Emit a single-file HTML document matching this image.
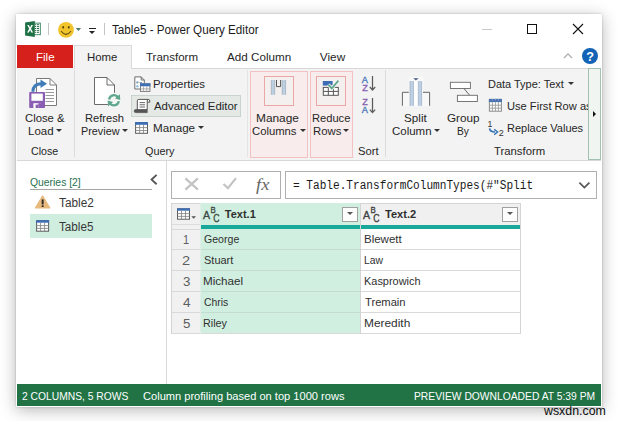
<!DOCTYPE html>
<html>
<head>
<meta charset="utf-8">
<style>
html,body{margin:0;padding:0;}
body{width:617px;height:421px;overflow:hidden;background:#fff;font-family:"Liberation Sans",sans-serif;position:relative;color:#262626;}
.abs{position:absolute;}
svg{position:absolute;overflow:visible;}
.t{position:absolute;white-space:pre;line-height:16px;font-size:11.5px;color:#262626;transform-origin:0 0;}
#win{position:absolute;left:16px;top:14px;width:586px;height:392.7px;background:#fff;box-shadow:0 3px 15px rgba(0,0,0,0.29),0 0 2px rgba(0,0,0,0.22);}
#ribbon{position:absolute;left:17px;top:68px;width:584px;height:93px;background:#f3f3f3;border-bottom:1px solid #d8d8d8;box-sizing:border-box;}
.sep{position:absolute;width:1px;background:#dcdcdc;top:70px;height:87px;}
.pink{position:absolute;background:#f9ecec;border:1px solid #f2c2c2;box-sizing:border-box;}
.pinkin{position:absolute;background:#f5f0f0;border:1px solid #eba6a6;box-sizing:border-box;}
.arr{position:absolute;width:0;height:0;border-left:3px solid transparent;border-right:3px solid transparent;border-top:3px solid #333;}
.row{position:absolute;left:171px;width:350px;height:1px;background:#d9d9d9;}
.vl{position:absolute;width:1px;background:#d4d4d4;top:203px;height:131px;}
</style>
</head>
<body>
<div id="win"></div>

<!-- title bar icons -->
<svg style="left:24px;top:20px" width="18" height="18" viewBox="24 20 18 18">
  <rect x="33.5" y="23.1" width="6.8" height="11.6" fill="#fff" stroke="#2f7f57" stroke-width="0.9"/>
  <g stroke="#256f49" stroke-width="1"><line x1="36.8" y1="24.7" x2="39" y2="24.7"/><line x1="36.8" y1="26.6" x2="39" y2="26.6"/><line x1="36.8" y1="28.5" x2="39" y2="28.5"/><line x1="36.8" y1="30.4" x2="39" y2="30.4"/><line x1="36.8" y1="32.3" x2="39" y2="32.3"/></g>
  <g stroke="#256f49" stroke-width="1"><line x1="34.8" y1="24.7" x2="36" y2="24.7"/><line x1="34.8" y1="26.6" x2="36" y2="26.6"/><line x1="34.8" y1="28.5" x2="36" y2="28.5"/><line x1="34.8" y1="30.4" x2="36" y2="30.4"/><line x1="34.8" y1="32.3" x2="36" y2="32.3"/></g>
  <path d="M25.1 22.4 L34.8 20.9 L34.8 37.1 L25.1 35.5 Z" fill="#1e7145"/>
  <path d="M27.2 25 L28.9 25 L30.1 27.5 L31.3 25 L33 25 L31 28.8 L33.1 32.6 L31.3 32.6 L30.1 30.1 L28.9 32.6 L27.1 32.6 L29.2 28.8 Z" fill="#fff"/>
</svg>
<div class="abs" style="left:48px;top:23px;width:1px;height:12px;background:#c4c4c4"></div>
<svg style="left:57px;top:21px" width="18" height="18" viewBox="57 21 18 18">
  <circle cx="66" cy="29.8" r="7.9" fill="#f2c42c"/>
  <ellipse cx="63.2" cy="27.3" rx="0.85" ry="1.4" fill="#54430f"/><ellipse cx="68.8" cy="27.3" rx="0.85" ry="1.4" fill="#54430f"/>
  <path d="M61.4 31.5 Q66 37.2 70.7 31.5" fill="none" stroke="#54430f" stroke-width="1.05" stroke-linecap="round"/>
</svg>
<svg style="left:75px;top:27px" width="7" height="5" viewBox="75 27 7 5"><path d="M75.7 27.9 H81.1 L78.4 31 Z" fill="#4f7d6a"/></svg>
<div class="abs" style="left:89px;top:28px;width:7px;height:1px;background:#222"></div>
<div class="abs" style="left:89px;top:31px;width:0;height:0;border-left:3.5px solid transparent;border-right:3.5px solid transparent;border-top:3.5px solid #222"></div>
<div class="abs" style="left:104px;top:23px;width:1px;height:12px;background:#c4c4c4"></div>

<!-- window buttons -->
<div class="abs" style="left:482px;top:29px;width:10px;height:1px;background:#c8c8c8"></div>
<div class="abs" style="left:527px;top:24px;width:10px;height:10px;border:1px solid #111;box-sizing:border-box"></div>
<svg style="left:572px;top:23px" width="12" height="12" viewBox="0 0 12 12"><path d="M1 1 L11 11 M11 1 L1 11" stroke="#111" stroke-width="1.1" fill="none"/></svg>

<!-- tabs -->
<div id="ribbon"></div>
<div class="abs" style="left:131px;top:68px;width:470px;height:1px;background:#d8d8d8"></div>
<div class="abs" style="left:17px;top:45px;width:56px;height:22.5px;background:#d6201b"></div>
<div class="abs" style="left:74px;top:45px;width:58px;height:24px;background:#f3f3f3;border:1px solid #dadada;border-bottom:none;box-sizing:border-box"></div>
<svg style="left:563px;top:52px" width="10" height="7" viewBox="563 52 10 7"><path d="M564 58 L568 53.9 L572 58" stroke="#adadad" stroke-width="1.3" fill="none"/></svg>
<svg style="left:581px;top:47px" width="18" height="18" viewBox="581 47 18 18"><circle cx="590" cy="56" r="8" fill="#1262b6"/><text x="590.2" y="60.5" text-anchor="middle" font-family="Liberation Sans" font-weight="bold" font-size="12.6" fill="#fff">?</text></svg>

<!-- Close & Load icon -->
<svg style="left:29px;top:77px" width="30" height="32" viewBox="29 77 30 32">
  <path d="M36.5 78.5 H50 L56.5 85 V105.5 H36.5 Z" fill="#fff" stroke="#7a7a7a" stroke-width="1"/>
  <path d="M50 78.5 V85 H56.5" fill="none" stroke="#7a7a7a" stroke-width="1"/>
  <g stroke="#9a9a9a" stroke-width="1"><line x1="45.5" y1="89.5" x2="54" y2="89.5"/><line x1="45.5" y1="92.5" x2="54" y2="92.5"/><line x1="45.5" y1="95.5" x2="54" y2="95.5"/><line x1="45.5" y1="98.5" x2="54" y2="98.5"/><line x1="45.5" y1="101.5" x2="54" y2="101.5"/></g>
  <path d="M32.9 91.8 C32.9 86 36.5 83.7 41.5 83.7" fill="none" stroke="#3f7cb8" stroke-width="3"/>
  <path d="M40.5 79.4 L47 83.7 L40.5 88 Z" fill="#3f7cb8"/>
  <rect x="29.2" y="92" width="15.8" height="16" rx="0.8" fill="#8a5eb2"/>
  <rect x="31.4" y="93.6" width="11.4" height="7.2" fill="#fff"/>
  <rect x="33.4" y="103.2" width="7.6" height="4.8" fill="#fff"/>
  <rect x="35.6" y="104.6" width="2.6" height="3.4" fill="#8a5eb2"/>
  <rect x="38.2" y="103.2" width="2.8" height="4.8" fill="#8a5eb2"/>
</svg>

<!-- Refresh preview icon -->
<svg style="left:93px;top:76px" width="30" height="33" viewBox="93 76 30 33">
  <path d="M94.5 77.5 H107 L114.5 85 V104.5 H94.5 Z" fill="#fff" stroke="#6a6a6a" stroke-width="1"/>
  <path d="M107 77.5 V85 H114.5" fill="none" stroke="#6a6a6a" stroke-width="1"/>
  <circle cx="114" cy="100.3" r="7.6" fill="#f5f7f6"/>
  <path d="M109.2 99.5 A4.9 4.9 0 0 1 118 97.2" fill="none" stroke="#5ea68c" stroke-width="2.3"/>
  <path d="M119.9 94.2 L120.3 100 L114.9 98.6 Z" fill="#5ea68c"/>
  <path d="M118.8 101.1 A4.9 4.9 0 0 1 110 103.4" fill="none" stroke="#5ea68c" stroke-width="2.3"/>
  <path d="M108.1 106.4 L107.7 100.6 L113.1 102 Z" fill="#5ea68c"/>
</svg>

<!-- Advanced editor highlight -->
<div class="abs" style="left:131px;top:95px;width:110px;height:22px;background:#e4e9e6;border:1px solid #c6d4cc;box-sizing:border-box"></div>

<!-- Properties icon -->
<svg style="left:134px;top:76px" width="17" height="16" viewBox="134 76 17 16">
  <path d="M134.8 76.9 H141.2 L144.3 80 V89 H134.8 Z" fill="#fff" stroke="#6e6e6e" stroke-width="1"/>
  <path d="M141.2 76.9 V80 H144.3" fill="none" stroke="#6e6e6e" stroke-width="1"/>
  <circle cx="137.4" cy="82.4" r="1.2" fill="#8da0b8"/>
  <line x1="139.5" y1="82.4" x2="142" y2="82.4" stroke="#7d93b0" stroke-width="1"/>
  <circle cx="137.4" cy="86.2" r="1.2" fill="#8fc0dd"/>
  <rect x="140.5" y="83.8" width="9.4" height="7.6" fill="#fff" stroke="#7a7a7a" stroke-width="1"/>
  <rect x="140" y="83.3" width="10.4" height="3" fill="#3f6fb5"/>
  <g stroke="#9a9a9a" stroke-width="0.8"><line x1="143.6" y1="86.3" x2="143.6" y2="91.4"/><line x1="146.8" y1="86.3" x2="146.8" y2="91.4"/><line x1="140.5" y1="88.9" x2="149.9" y2="88.9"/></g>
</svg>

<!-- Advanced editor icon -->
<svg style="left:133px;top:98px" width="18" height="16" viewBox="133 98 18 16">
  <path d="M137.3 109.8 V100.8 Q137.3 99.4 138.8 99.4 H148.2 Q149.8 99.4 149.8 101 V102.2 H147.2 V109.8" fill="#fff" stroke="#555" stroke-width="1"/>
  <path d="M147.2 102.2 V101 Q147.2 99.6 148.4 99.6" fill="none" stroke="#555" stroke-width="1"/>
  <path d="M134.2 111 Q134.2 109.5 135.8 109.5 H147.2 V112.6 H135.8 Q134.2 112.6 134.2 111 Z" fill="#555" stroke="#555" stroke-width="0.8"/>
  <g stroke="#666" stroke-width="1"><line x1="139.6" y1="102.6" x2="145" y2="102.6"/><line x1="139.6" y1="104.8" x2="145" y2="104.8"/><line x1="139.6" y1="107" x2="145" y2="107"/></g>
</svg>

<!-- Manage icon -->
<svg style="left:135px;top:122px" width="13" height="12" viewBox="135 122 13 12">
  <rect x="135.6" y="122.5" width="11.9" height="10.8" fill="#fff" stroke="#5a5a5a" stroke-width="1"/>
  <rect x="135.1" y="122" width="12.9" height="2.8" fill="#3d6db5"/>
  <g stroke="#8a8a8a" stroke-width="0.9"><line x1="139.6" y1="124.8" x2="139.6" y2="133.3"/><line x1="143.5" y1="124.8" x2="143.5" y2="133.3"/><line x1="135.6" y1="127.6" x2="147.5" y2="127.6"/><line x1="135.6" y1="130.5" x2="147.5" y2="130.5"/></g>
</svg>
<div class="arr" style="left:198px;top:126px"></div>

<!-- arrows on big buttons -->
<div class="arr" style="left:55.5px;top:129px"></div>
<div class="arr" style="left:121.5px;top:129px"></div>
<div class="sep" style="left:74px"></div>

<!-- Manage columns / Reduce rows -->
<div class="sep" style="left:247px;background:#e4e4e4"></div>
<div class="pink" style="left:250px;top:71px;width:58px;height:87px"></div>
<div class="pinkin" style="left:264px;top:76px;width:30px;height:30px"></div>
<svg style="left:270px;top:79px" width="17" height="17" viewBox="270 79 17 17">
  <rect x="271.3" y="80" width="3.4" height="14.8" fill="#bcd0e4"/>
  <rect x="282.2" y="80" width="3.4" height="14.8" fill="#bcd0e4"/>
  <g stroke="#a4adb8" stroke-width="0.8"><line x1="271.3" y1="80" x2="271.3" y2="94.8"/><line x1="274.7" y1="80" x2="274.7" y2="94.8"/><line x1="282.2" y1="80" x2="282.2" y2="94.8"/><line x1="285.6" y1="80" x2="285.6" y2="94.8"/></g>
  <path d="M276.5 80 V86.6 H280.6 V80" fill="none" stroke="#555" stroke-width="1"/>
</svg>
<div class="arr" style="left:299.5px;top:129px"></div>
<div class="pink" style="left:310px;top:71px;width:43px;height:87px"></div>
<div class="pinkin" style="left:316px;top:76px;width:30px;height:30px"></div>
<svg style="left:322px;top:79px" width="18" height="18" viewBox="322 79 18 18">
  <rect x="322.8" y="81" width="9.8" height="4.6" fill="#3d6db5"/>
  <rect x="323.3" y="87.4" width="15" height="7.9" fill="#fff" stroke="#555" stroke-width="1"/>
  <g stroke="#555" stroke-width="1"><line x1="323.3" y1="91.4" x2="338.3" y2="91.4"/><line x1="328.3" y1="87.4" x2="328.3" y2="95.3"/><line x1="333.4" y1="87.4" x2="333.4" y2="95.3"/></g>
  <path d="M328.3 84.6 L331.8 88.4 L338.4 80.6" fill="none" stroke="#f4f4f4" stroke-width="3.4"/>
  <path d="M328.3 84.6 L331.8 88.4 L338.4 80.6" fill="none" stroke="#5ea68c" stroke-width="1.7"/>
</svg>
<div class="arr" style="left:343px;top:129px"></div>

<!-- sort icons -->
<svg style="left:360px;top:75px" width="18" height="40" viewBox="360 75 18 40">
  <g font-family="Liberation Sans" font-size="9.2" stroke-width="0.3">
    <text x="361.8" y="82.8" fill="#4472b8" stroke="#4472b8">A</text>
    <text x="362.3" y="91" fill="#8a5fb0" stroke="#8a5fb0">Z</text>
    <text x="362.3" y="105" fill="#8a5fb0" stroke="#8a5fb0">Z</text>
    <text x="361.8" y="112.9" fill="#4472b8" stroke="#4472b8">A</text>
  </g>
  <g stroke="#5a5a5a" stroke-width="1.25" fill="none">
    <path d="M372.5 76 V90 M369.8 87 L372.5 90 L375.2 87"/>
    <path d="M372.5 98 V112.6 M369.8 109.6 L372.5 112.6 L375.2 109.6"/>
  </g>
</svg>
<div class="sep" style="left:385px"></div>

<!-- Split column icon -->
<svg style="left:401px;top:76px" width="30" height="31" viewBox="401 76 30 31">
  <rect x="408.5" y="76.5" width="15" height="29.5" fill="#f8f8f8"/>
  <rect x="403" y="92.5" width="26" height="13.5" fill="#f8f8f8"/>
  <path d="M408.8 92.3 H402.4 V105.8" fill="none" stroke="#666" stroke-width="1"/>
  <path d="M423 92.3 H429.6 V105.8" fill="none" stroke="#666" stroke-width="1"/>
  <rect x="410" y="81" width="3.6" height="24.8" fill="#bccfe4"/>
  <rect x="418" y="81" width="3.6" height="24.8" fill="#bccfe4"/>
  <g stroke="#a6b2c2" stroke-width="0.8"><line x1="410" y1="81" x2="410" y2="105.8"/><line x1="413.6" y1="81" x2="413.6" y2="105.8"/><line x1="418" y1="81" x2="418" y2="105.8"/><line x1="421.6" y1="81" x2="421.6" y2="105.8"/></g>
  <rect x="414" y="78" width="3.6" height="28" fill="#fff"/>
  <path d="M413.2 78.2 H418.6 L415.9 80.6 Z" fill="#4a5a82"/>
</svg>
<div class="arr" style="left:433.5px;top:129px"></div>

<!-- Group by icon -->
<svg style="left:449px;top:81px" width="30" height="22" viewBox="449 81 30 22">
  <rect x="450.4" y="82.3" width="20" height="6.2" fill="#fff" stroke="#707070" stroke-width="0.95"/>
  <rect x="457.4" y="95.3" width="20" height="6.2" fill="#fff" stroke="#707070" stroke-width="0.95"/>
  <line x1="464" y1="88.6" x2="469.6" y2="95.2" stroke="#666" stroke-width="1"/>
</svg>

<!-- Data type arrow -->
<div class="arr" style="left:567.5px;top:82px"></div>
<!-- Use first row icon -->
<svg style="left:488px;top:98px" width="14" height="14" viewBox="488 98 14 14">
  <rect x="489.4" y="99.4" width="12" height="11.8" fill="#fff" stroke="#8a8a8a" stroke-width="1"/>
  <rect x="488.9" y="98.9" width="13" height="3.2" fill="#4a72b0"/>
  <g stroke="#9c9c9c" stroke-width="0.9"><line x1="492.4" y1="102" x2="492.4" y2="111.2"/><line x1="495.4" y1="102" x2="495.4" y2="111.2"/><line x1="498.4" y1="102" x2="498.4" y2="111.2"/><line x1="489.4" y1="105.2" x2="501.4" y2="105.2"/><line x1="489.4" y1="108.2" x2="501.4" y2="108.2"/></g>
  <g stroke="#8fa8d0" stroke-width="0.8"><line x1="492.4" y1="98.9" x2="492.4" y2="100.6"/><line x1="495.4" y1="98.9" x2="495.4" y2="100.6"/><line x1="498.4" y1="98.9" x2="498.4" y2="100.6"/></g>
</svg>
<!-- replace values icon -->
<svg style="left:487px;top:119px" width="18" height="18" viewBox="487 119 18 18">
  <text x="487.5" y="126.7" font-family="Liberation Sans" font-size="8.8" fill="#333">1</text>
  <text x="498.8" y="135.7" font-family="Liberation Sans" font-size="9" fill="#333">2</text>
  <path d="M489.6 128.4 C489.8 131.4 491.6 132 495 132" fill="none" stroke="#3b78b6" stroke-width="1.7"/>
  <path d="M494.2 129.3 L497.6 132 L494.2 134.7" fill="none" stroke="#3b78b6" stroke-width="1.5"/>
</svg>
<!-- ribbon scroll button -->
<div class="abs" style="left:588px;top:68px;width:13px;height:92px;background:#f1f5f2;border:1px solid #a3c1b1;box-sizing:border-box"></div>
<div class="abs" style="left:592.8px;top:110.6px;width:0;height:0;border-top:3px solid transparent;border-bottom:3px solid transparent;border-left:3.6px solid #111"></div>

<!-- queries pane -->
<div class="abs" style="left:166px;top:161px;width:1px;height:223px;background:#d8d8d8"></div>
<div class="abs" style="left:30px;top:189px;width:122px;height:1px;background:#a6a6a6"></div>
<svg style="left:149px;top:173px" width="10" height="13" viewBox="149 173 10 13"><path d="M156.6 174.9 L151.6 179.6 L156.6 184.3" stroke="#555" stroke-width="1.9" fill="none"/></svg>
<svg style="left:34px;top:194px" width="18" height="16" viewBox="34 194 18 16">
  <path d="M42.6 196.2 L49.6 207.9 H35.6 Z" fill="#e8b97c" stroke="#e8b97c" stroke-width="1.4" stroke-linejoin="round"/>
  <rect x="41.7" y="199.4" width="1.9" height="5" fill="#2a2a2a"/>
  <rect x="41.7" y="205.3" width="1.9" height="1.7" fill="#2a2a2a"/>
</svg>
<div class="abs" style="left:30px;top:214px;width:122px;height:24px;background:#cfeee0"></div>
<svg style="left:36px;top:220px" width="14" height="12" viewBox="36 220 14 12">
  <rect x="36.6" y="220.7" width="12" height="10.5" fill="#fff" stroke="#5a5a5a" stroke-width="1"/>
  <rect x="36.1" y="220.2" width="13" height="2.5" fill="#3d6db5"/>
  <g stroke="#8a8a8a" stroke-width="0.9"><line x1="40.6" y1="222.7" x2="40.6" y2="231.2"/><line x1="44.6" y1="222.7" x2="44.6" y2="231.2"/><line x1="36.6" y1="225.6" x2="48.6" y2="225.6"/><line x1="36.6" y1="228.4" x2="48.6" y2="228.4"/></g>
</svg>

<!-- formula bar -->
<div class="abs" style="left:171px;top:171px;width:110px;height:28px;border:1px solid #b0b0b0;box-sizing:border-box;background:#fff"></div>
<div class="abs" style="left:285px;top:171px;width:312px;height:28px;border:1px solid #b0b0b0;box-sizing:border-box;background:#fff"></div>
<svg style="left:184px;top:178px" width="15" height="13" viewBox="184 178 15 13"><path d="M185.4 178.4 L197.9 189.6 M197.9 178.4 L185.4 189.6" stroke="#c3c3c3" stroke-width="2.2" fill="none"/></svg>
<svg style="left:222px;top:177px" width="15" height="13" viewBox="222 177 15 13"><path d="M223.5 184 L227.9 188.2 L236 178.1" stroke="#c3c3c3" stroke-width="2.2" fill="none"/></svg>
<svg style="left:578px;top:181px" width="13" height="9" viewBox="0 0 13 9"><path d="M1.4 1.6 L6.4 6.6 L11.4 1.6" stroke="#555" stroke-width="1.7" fill="none"/></svg>

<!-- grid -->
<div class="abs" style="left:171px;top:203px;width:350px;height:131px;background:#fff"></div>
<div class="abs" style="left:171px;top:203px;width:350px;height:22px;background:#f0f0f0;border-top:1px solid #d4d4d4;box-sizing:border-box"></div>
<div class="abs" style="left:171px;top:225px;width:30px;height:109px;background:#f1f1f1"></div>
<div class="abs" style="left:201px;top:203px;width:160px;height:131px;background:#d0efe0"></div>
<div class="abs" style="left:201px;top:225px;width:160px;height:4px;background:#19a99a"></div>
<div class="abs" style="left:361px;top:225px;width:160px;height:4px;background:#19a99a"></div>
<div class="abs" style="left:171px;top:224px;width:30px;height:1px;background:#dcdcdc"></div>
<div class="row" style="top:229px;width:30px"></div>
<div class="row" style="top:249px"></div>
<div class="row" style="top:270px"></div>
<div class="row" style="top:291px"></div>
<div class="row" style="top:312px"></div>
<div class="row" style="top:333px"></div>
<div class="abs" style="left:201px;top:249px;width:159px;height:1px;background:#c4dccf"></div>
<div class="abs" style="left:201px;top:270px;width:159px;height:1px;background:#c4dccf"></div>
<div class="abs" style="left:201px;top:291px;width:159px;height:1px;background:#c4dccf"></div>
<div class="abs" style="left:201px;top:312px;width:159px;height:1px;background:#c4dccf"></div>
<div class="vl" style="left:171px"></div>
<div class="abs" style="left:200px;top:203px;width:1px;height:131px;background:#dfeee7"></div>
<div class="vl" style="left:360px"></div>
<div class="vl" style="left:520px"></div>
<svg style="left:177px;top:208px" width="20" height="12" viewBox="177 208 20 12">
  <rect x="177.5" y="208.8" width="12" height="10.4" fill="#fff" stroke="#5a5a5a" stroke-width="1"/>
  <rect x="177" y="208.3" width="13" height="2.4" fill="#3d6db5"/>
  <g stroke="#8a8a8a" stroke-width="0.9"><line x1="181.5" y1="210.7" x2="181.5" y2="219.2"/><line x1="185.5" y1="210.7" x2="185.5" y2="219.2"/><line x1="177.5" y1="213.6" x2="189.5" y2="213.6"/><line x1="177.5" y1="216.4" x2="189.5" y2="216.4"/></g>
  <path d="M191.3 216.3 H196 L193.65 218.8 Z" fill="#555"/>
</svg>
<!-- ABC icons -->
<svg style="left:202px;top:205px" width="20" height="18" viewBox="202 205 20 18">
  <g font-family="Liberation Sans" fill="#3c4a43" stroke="#3c4a43" stroke-width="0.35">
  <text x="202.9" y="218.5" font-size="10.6">A</text>
  <text x="210.4" y="213.4" font-size="9.2" textLength="5.2" lengthAdjust="spacingAndGlyphs">B</text>
  <text x="213.3" y="221.8" font-size="10" textLength="6.3" lengthAdjust="spacingAndGlyphs">C</text></g>
</svg>
<svg style="left:362px;top:205px" width="20" height="18" viewBox="202 205 20 18">
  <g font-family="Liberation Sans" fill="#404040" stroke="#404040" stroke-width="0.35">
  <text x="202.9" y="218.5" font-size="10.6">A</text>
  <text x="210.4" y="213.4" font-size="9.2" textLength="5.2" lengthAdjust="spacingAndGlyphs">B</text>
  <text x="213.3" y="221.8" font-size="10" textLength="6.3" lengthAdjust="spacingAndGlyphs">C</text></g>
</svg>
<div class="abs" style="left:342px;top:206.5px;width:16px;height:15px;border:1px solid #a0a0a0;box-sizing:border-box;background:#fdfdfd"></div>
<div class="abs" style="left:347px;top:212.2px;width:0;height:0;border-left:3px solid transparent;border-right:3px solid transparent;border-top:3.2px solid #555"></div>
<div class="abs" style="left:502px;top:206.5px;width:16px;height:15px;border:1px solid #a0a0a0;box-sizing:border-box;background:#fdfdfd"></div>
<div class="abs" style="left:507px;top:212.2px;width:0;height:0;border-left:3px solid transparent;border-right:3px solid transparent;border-top:3.2px solid #555"></div>

<!-- status bar -->
<div class="abs" style="left:17px;top:384px;width:584px;height:21.6px;background:#217346"></div>

<div class="t" style="left:112.0px;top:21.84px;font-size:12px;color:#1b1b1b;transform:scaleX(0.9724)">Table5 - Power Query Editor</div>
<div class="t" style="left:35.7px;top:48.61px;font-size:11.8px;color:#fff;transform:scaleX(0.9771)">File</div>
<div class="t" style="left:86.5px;top:48.61px;font-size:11.8px;transform:scaleX(0.9667)">Home</div>
<div class="t" style="left:145.8px;top:48.61px;font-size:11.8px;transform:scaleX(0.9761)">Transform</div>
<div class="t" style="left:227.0px;top:48.61px;font-size:11.8px;transform:scaleX(0.9883)">Add Column</div>
<div class="t" style="left:319.8px;top:48.61px;font-size:11.8px;transform:scaleX(1.0000)">View</div>
<div class="t" style="left:25.1px;top:110.32px;font-size:11.5px;transform:scaleX(0.9811)">Close &amp;</div>
<div class="t" style="left:27.5px;top:123.02px;font-size:11.5px;transform:scaleX(0.9979)">Load</div>
<div class="t" style="left:31.4px;top:142.62px;font-size:11.5px;transform:scaleX(0.9263)">Close</div>
<div class="t" style="left:85.0px;top:110.32px;font-size:11.5px;transform:scaleX(0.9688)">Refresh</div>
<div class="t" style="left:80.6px;top:123.02px;font-size:11.5px;transform:scaleX(0.9425)">Preview</div>
<div class="t" style="left:152.9px;top:75.82px;font-size:11.5px;transform:scaleX(0.9922)">Properties</div>
<div class="t" style="left:153.6px;top:97.82px;font-size:11.5px;transform:scaleX(0.9911)">Advanced Editor</div>
<div class="t" style="left:152.9px;top:120.02px;font-size:11.5px;transform:scaleX(1.0125)">Manage</div>
<div class="t" style="left:145.3px;top:142.62px;font-size:11.5px;transform:scaleX(0.9431)">Query</div>
<div class="t" style="left:256.3px;top:110.32px;font-size:11.5px;transform:scaleX(1.0325)">Manage</div>
<div class="t" style="left:252.3px;top:123.02px;font-size:11.5px;transform:scaleX(0.9798)">Columns</div>
<div class="t" style="left:311.6px;top:110.32px;font-size:11.5px;transform:scaleX(0.9673)">Reduce</div>
<div class="t" style="left:312.7px;top:123.02px;font-size:11.5px;transform:scaleX(0.9872)">Rows</div>
<div class="t" style="left:357.5px;top:142.62px;font-size:11.5px;transform:scaleX(0.9756)">Sort</div>
<div class="t" style="left:403.9px;top:110.32px;font-size:11.5px;transform:scaleX(1.0161)">Split</div>
<div class="t" style="left:392.1px;top:123.02px;font-size:11.5px;transform:scaleX(0.9974)">Column</div>
<div class="t" style="left:447.1px;top:110.32px;font-size:11.5px;transform:scaleX(1.0194)">Group</div>
<div class="t" style="left:457.4px;top:123.02px;font-size:11.5px;transform:scaleX(0.8898)">By</div>
<div class="t" style="left:487.9px;top:75.82px;font-size:11.5px;transform:scaleX(0.9541)">Data Type: Text</div>
<div class="abs" style="left:506.8px;top:97.82px;width:81.6px;height:16px;overflow:hidden"><div class="t" style="left:0;top:0;font-size:11.5px;transform:scaleX(0.9670)">Use First Row as</div></div>
<div class="t" style="left:506.8px;top:119.62px;font-size:11.5px;transform:scaleX(0.9546)">Replace Values</div>
<div class="t" style="left:494.1px;top:142.62px;font-size:11.5px;transform:scaleX(0.9843)">Transform</div>
<div class="t" style="left:30.2px;top:174.02px;font-size:11.5px;color:#2a7050;transform:scaleX(0.9018)">Queries [2]</div>
<div class="t" style="left:59.4px;top:194.84px;font-size:12px;color:#383838;transform:scaleX(0.9826)">Table2</div>
<div class="t" style="left:59.4px;top:218.84px;font-size:12px;color:#383838;transform:scaleX(0.9755)">Table5</div>
<div class="t" style="left:224.8px;top:205.79px;font-size:11px;font-weight:bold;color:#2e2e2e;transform:scaleX(1.0000)">Text.1</div>
<div class="t" style="left:384.7px;top:205.79px;font-size:11px;font-weight:bold;color:#2e2e2e;transform:scaleX(1.0083)">Text.2</div>
<div class="t" style="left:203.9px;top:231.19px;font-size:11px;color:#303030;transform:scaleX(0.9622)">George</div>
<div class="t" style="left:203.9px;top:252.19px;font-size:11px;color:#303030;transform:scaleX(0.9983)">Stuart</div>
<div class="t" style="left:203.3px;top:273.19px;font-size:11px;color:#303030;transform:scaleX(1.0593)">Michael</div>
<div class="t" style="left:203.9px;top:294.19px;font-size:11px;color:#303030;transform:scaleX(0.9414)">Chris</div>
<div class="t" style="left:203.4px;top:315.19px;font-size:11px;color:#303030;transform:scaleX(0.9806)">Riley</div>
<div class="t" style="left:364.0px;top:231.19px;font-size:11px;color:#303030;transform:scaleX(1.0457)">Blewett</div>
<div class="t" style="left:364.1px;top:252.19px;font-size:11px;color:#303030;transform:scaleX(0.9403)">Law</div>
<div class="t" style="left:364.0px;top:273.19px;font-size:11px;color:#303030;transform:scaleX(0.9955)">Kasprowich</div>
<div class="t" style="left:364.5px;top:294.19px;font-size:11px;color:#303030;transform:scaleX(1.0154)">Tremain</div>
<div class="t" style="left:363.9px;top:315.19px;font-size:11px;color:#303030;transform:scaleX(1.0805)">Meredith</div>
<div class="t" style="left:182.7px;top:231.67px;font-size:12.5px;color:#5e5e5e;transform:scaleX(0.8762)">1</div>
<div class="t" style="left:182.1px;top:252.67px;font-size:12.5px;color:#5e5e5e;transform:scaleX(1.1636)">2</div>
<div class="t" style="left:182.5px;top:273.67px;font-size:12.5px;color:#5e5e5e;transform:scaleX(1.0667)">3</div>
<div class="t" style="left:182.5px;top:294.67px;font-size:12.5px;color:#5e5e5e;transform:scaleX(1.0880)">4</div>
<div class="t" style="left:182.5px;top:315.67px;font-size:12.5px;color:#5e5e5e;transform:scaleX(1.0667)">5</div>
<div class="t" style="left:21.9px;top:388.02px;font-size:11.5px;color:#fff;transform:scaleX(0.8951)">2 COLUMNS, 5 ROWS</div>
<div class="t" style="left:143.0px;top:388.02px;font-size:11.5px;color:#fff;transform:scaleX(0.9637)">Column profiling based on top 1000 rows</div>
<div class="t" style="left:414.2px;top:388.02px;font-size:11.5px;color:#fff;transform:scaleX(0.8959)">PREVIEW DOWNLOADED AT 5:39 PM</div>
<div class="t" style="left:544.2px;top:403.23px;font-size:12.9px;color:#0c0c0c;transform:scaleX(0.9600)">wsxdn.com</div>
<div class="t" style="left:293.0px;top:177.70px;font-size:12px;font-family:'Liberation Mono',monospace;color:#1a1a1a;transform:scaleX(0.9263)">= Table.TransformColumnTypes(#&quot;Split</div>
<div class="t" style="left:255.7px;top:177.20px;font-size:16px;font-family:'Liberation Serif',serif;font-style:italic;color:#666;transform:scaleX(1.1556)">fx</div>

</body>
</html>
